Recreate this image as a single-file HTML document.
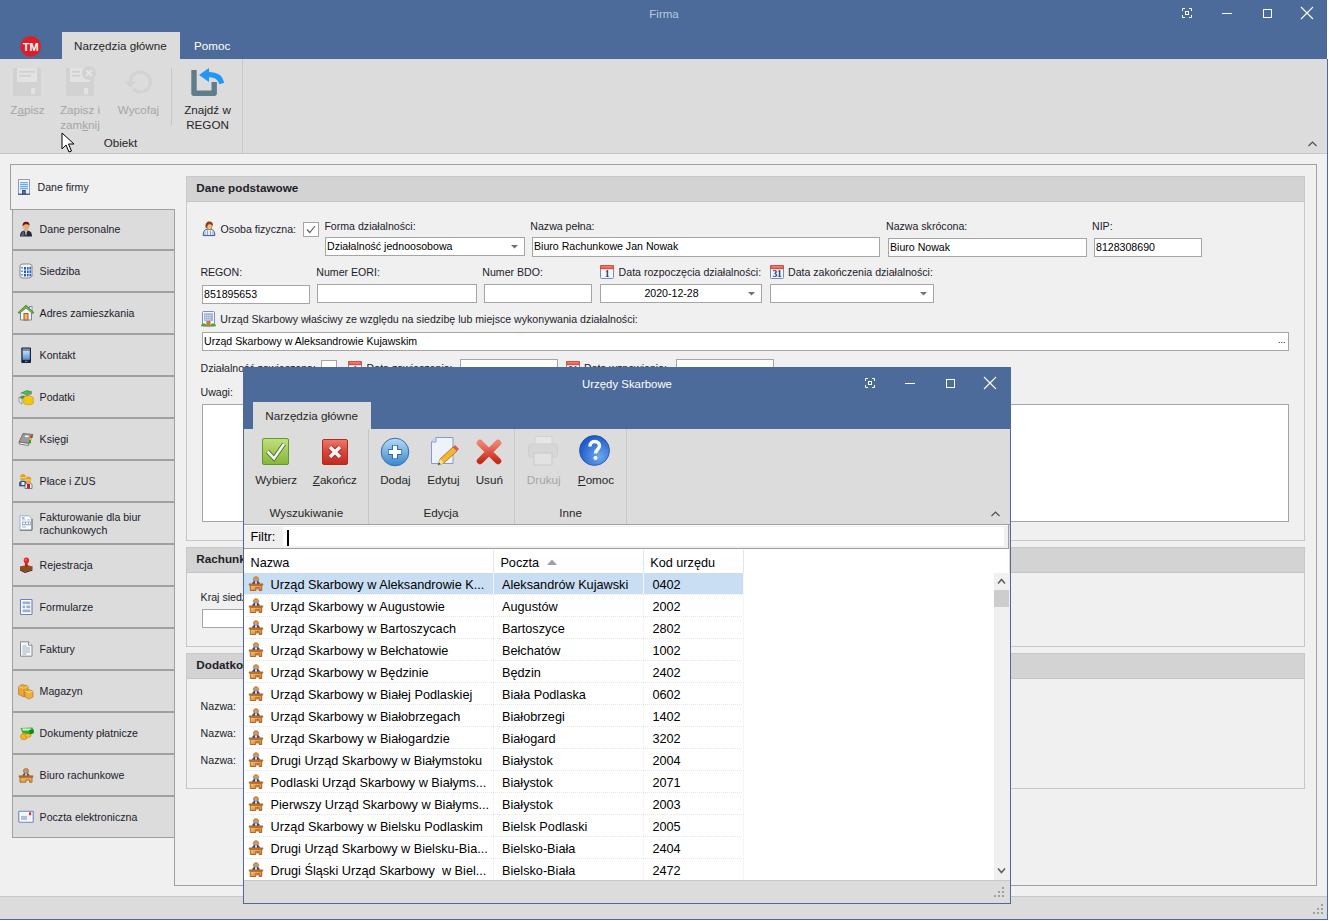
<!DOCTYPE html>
<html><head><meta charset="utf-8"><style>
html,body{margin:0;padding:0;}
body{width:1329px;height:921px;position:relative;overflow:hidden;background:#fff;font-family:"Liberation Sans",sans-serif;}
div{position:absolute;box-sizing:border-box;}
.t{white-space:nowrap;line-height:16px;height:16px;}
svg{overflow:visible}
</style></head><body>
<div style="left:0px;top:0px;width:1327px;height:59px;background:#4c6b9b"></div>
<div class="t" style="left:514px;width:300px;text-align:center;top:6.0px;font-size:11.5px;color:#b8c8de;">Firma</div>
<svg style="position:absolute;left:1182px;top:8px" width="10" height="10" viewBox="0 0 10 10"><g stroke="#fff" stroke-width="1" fill="none"><path d="M0.5 3V0.5H3M7 0.5H9.5V3M9.5 7V9.5H7M3 9.5H0.5V7"/><rect x="3.5" y="3.5" width="3" height="3"/></g></svg>
<svg style="position:absolute;left:1222px;top:13px" width="10" height="1" viewBox="0 0 10 1"><rect x="0" y="0" width="10" height="1" fill="#fff"/></svg>
<svg style="position:absolute;left:1263px;top:9px" width="9" height="9" viewBox="0 0 9 9"><rect x="0.5" y="0.5" width="8" height="8" stroke="#fff" fill="none"/></svg>
<svg style="position:absolute;left:1301px;top:7px" width="12" height="12" viewBox="0 0 12 12"><path d="M0 0L12 12M12 0L0 12" stroke="#fff" stroke-width="1.1"/></svg>
<svg style="position:absolute;left:20px;top:36px" width="22" height="22" viewBox="0 0 22 22"><circle cx="10.6" cy="10.3" r="10.4" fill="#dc1f26"/><text x="10.8" y="14.6" font-family="Liberation Sans" font-weight="bold" font-size="11" fill="#fff" text-anchor="middle">TM</text></svg>
<div style="left:62px;top:32px;width:118px;height:27px;background:#dcdcdc"></div>
<div class="t" style="left:74px;top:38.0px;font-size:11.66px;color:#262626;">Narzędzia główne</div>
<div class="t" style="left:194px;top:38.0px;font-size:11.66px;color:#ffffff;">Pomoc</div>
<div style="left:0px;top:59px;width:1327px;height:94px;background:#dcdcdc"></div>
<div style="left:0px;top:153px;width:1327px;height:1px;background:#c6c6c6"></div>
<div style="left:171px;top:68px;width:1px;height:57px;background:#c6c6c6"></div>
<div style="left:242px;top:59px;width:1px;height:94px;background:#c6c6c6"></div>
<svg style="position:absolute;left:13px;top:68px" width="28" height="28" viewBox="0 0 28 28"><rect x="0" y="0" width="28" height="28" fill="#d2d2d2"/><rect x="4" y="0" width="20" height="14" fill="#e2e2e2"/><rect x="6" y="3" width="16" height="1.6" fill="#d0d0d0"/><rect x="6" y="7" width="12" height="1.6" fill="#d0d0d0"/><rect x="18" y="20" width="4" height="6" fill="#e2e2e2"/></svg>
<svg style="position:absolute;left:66px;top:66px" width="30" height="30" viewBox="0 0 30 30"><rect x="0" y="2" width="28" height="28" fill="#d2d2d2"/><rect x="4" y="2" width="20" height="14" fill="#e2e2e2"/><rect x="6" y="5" width="8" height="1.6" fill="#d0d0d0"/><rect x="6" y="9" width="8" height="1.6" fill="#d0d0d0"/><rect x="18" y="22" width="4" height="6" fill="#e2e2e2"/><circle cx="23" cy="7" r="7" fill="#d2d2d2"/><path d="M20 4l6 6M26 4l-6 6" stroke="#e4e4e4" stroke-width="1.8"/></svg>
<svg style="position:absolute;left:124px;top:70px" width="30" height="26" viewBox="0 0 30 26"><path d="M6.3 11.9A10 10 0 1 1 9.2 19" stroke="#d3d3d3" stroke-width="3.2" fill="none"/><path d="M0.5 11.3H12L6.3 18Z" fill="#d3d3d3"/></svg>
<svg style="position:absolute;left:190px;top:66px" width="36" height="32" viewBox="0 0 36 32"><path d="M4 4.1V27.2H24.2V16" stroke="#607d8b" stroke-width="5.4" fill="none" stroke-linejoin="round"/><path d="M9 9L19 1.9V16Z" fill="#2196f3"/><path d="M17.5 8.8C24 8.3 30 10.5 31.8 17.5" stroke="#2196f3" stroke-width="5.2" fill="none"/></svg>
<div class="t" style="left:-122.5px;width:300px;text-align:center;top:102.0px;font-size:11.66px;color:#a6a6a6;">Z<u>a</u>pisz</div>
<div class="t" style="left:-70px;width:300px;text-align:center;top:102.0px;font-size:11.66px;color:#a6a6a6;">Zapisz i</div>
<div class="t" style="left:-70px;width:300px;text-align:center;top:117.0px;font-size:11.66px;color:#a6a6a6;">zam<u>k</u>nij</div>
<div class="t" style="left:-11.5px;width:300px;text-align:center;top:102.0px;font-size:11.66px;color:#a6a6a6;">Wycofaj</div>
<div class="t" style="left:57.5px;width:300px;text-align:center;top:102.0px;font-size:11.66px;color:#262626;">Znajdź w</div>
<div class="t" style="left:57.5px;width:300px;text-align:center;top:117.0px;font-size:11.66px;color:#262626;">REGON</div>
<div class="t" style="left:-29.5px;width:300px;text-align:center;top:134.5px;font-size:11.66px;color:#262626;">Obiekt</div>
<div style="left:0px;top:154px;width:1327px;height:742px;background:#f0f0f0"></div>
<div style="left:0px;top:896px;width:1327px;height:1px;background:#c8c8c8"></div>
<div style="left:0px;top:897px;width:1327px;height:22px;background:#dcdcdc"></div>
<div style="left:0px;top:919px;width:1328px;height:1px;background:#4c6b9b"></div>
<div style="left:1327px;top:59px;width:1px;height:861px;background:#4c6b9b"></div>
<svg style="position:absolute;left:1311px;top:902px" width="12" height="12" viewBox="0 0 12 12"><rect x="10" y="2" width="2" height="2" fill="#a0a0a0"/><rect x="6" y="6" width="2" height="2" fill="#a0a0a0"/><rect x="10" y="6" width="2" height="2" fill="#a0a0a0"/><rect x="2" y="10" width="2" height="2" fill="#a0a0a0"/><rect x="6" y="10" width="2" height="2" fill="#a0a0a0"/><rect x="10" y="10" width="2" height="2" fill="#a0a0a0"/></svg>
<div style="left:1328px;top:0px;width:1px;height:921px;background:#ffffff"></div>
<div style="left:10px;top:164px;width:1306px;height:1px;background:#a0a0a0"></div>
<div style="left:10px;top:164px;width:1px;height:46px;background:#a0a0a0"></div>
<div style="left:10px;top:209px;width:3px;height:1px;background:#a0a0a0"></div>
<div style="left:1316px;top:164px;width:1px;height:722px;background:#a0a0a0"></div>
<div style="left:174px;top:885px;width:1143px;height:1px;background:#a0a0a0"></div>
<div style="left:174px;top:837px;width:1px;height:49px;background:#a0a0a0"></div>
<svg style="position:absolute;left:17px;top:179px" width="14" height="16" viewBox="0 0 14 16"><rect x="1.5" y="0.5" width="11" height="15" fill="#eaf0f8" stroke="#8c9cc0" stroke-width="1"/><rect x="2" y="1" width="10" height="1.6" fill="#ffffff"/><g fill="#6aaae6"><rect x="3" y="3" width="8" height="1.3" rx="0.6"/><rect x="3" y="5" width="8" height="1.3" rx="0.6"/><rect x="3" y="7" width="8" height="1.3" rx="0.6"/><rect x="3" y="9" width="8" height="1.3" rx="0.6"/></g><rect x="1" y="14.6" width="12" height="1.2" fill="#46527a"/><rect x="5" y="11" width="3.8" height="4.5" fill="#3a4a7a"/><rect x="6" y="12" width="1.8" height="2.5" fill="#6a7690"/></svg>
<div class="t" style="left:37.5px;top:179.0px;font-size:10.6px;color:#1b1b2b;">Dane firmy</div>
<div style="left:12px;top:209px;width:163px;height:41px;background:#dcdcdc;border:1px solid #a0a0a0;box-sizing:border-box"></div>
<div class="t" style="left:39.6px;top:221.0px;font-size:10.6px;color:#1b1b2b;">Dane personalne</div>
<svg style="position:absolute;left:18px;top:221px" width="16" height="16" viewBox="0 0 16 16"><path d="M2 15.5C2 11 4 9.5 8 9.5C12 9.5 14 11 14 15.5Z" fill="#232a3a"/><path d="M3 15C3 12 4.5 10.5 6 10.3L6.5 15Z" fill="#4a5a8a"/><path d="M6.5 9.6L8 15L9.5 9.6Z" fill="#f0f0f0"/><path d="M7.4 10.5L8 14L8.6 10.5Z" fill="#c02020"/><ellipse cx="8" cy="5.6" rx="3.1" ry="3.6" fill="#e8b070"/><path d="M4.6 5.5C4.3 2 6 0.8 8.2 0.8C10.5 0.8 11.8 2.2 11.5 5C10.8 3.5 9.5 3 8 3.2C6.5 3.2 5.5 4 4.6 5.5Z" fill="#6a1414"/></svg>
<div style="left:12px;top:250px;width:163px;height:42px;background:#dcdcdc;border:1px solid #a0a0a0;box-sizing:border-box"></div>
<div class="t" style="left:39.6px;top:263.0px;font-size:10.6px;color:#1b1b2b;">Siedziba</div>
<svg style="position:absolute;left:18px;top:263px" width="16" height="16" viewBox="0 0 16 16"><path d="M2 2.5L4 1H12L14 2.5V13.5L11 15H4L2 13.5Z" fill="#f4f6fa" stroke="#7a7a7a" stroke-width="0.9"/><g fill="#1a5ad0"><rect x="6" y="4" width="2" height="2.6"/><rect x="9" y="4" width="1.6" height="2.6"/><rect x="11.5" y="3.8" width="1.6" height="2.6"/><rect x="6" y="7.5" width="2" height="2.6"/><rect x="9" y="7.5" width="1.6" height="2.6"/><rect x="11.5" y="7.3" width="1.6" height="2.6"/><rect x="6" y="11" width="2" height="2.4"/><rect x="9" y="11" width="1.6" height="2.4"/><rect x="11.5" y="10.8" width="1.6" height="2.4"/></g><g fill="#6a9ae0"><rect x="3" y="4" width="2" height="1.5"/><rect x="3" y="7.5" width="2" height="1.5"/><rect x="3" y="11" width="2" height="1.5"/></g></svg>
<div style="left:12px;top:292px;width:163px;height:42px;background:#dcdcdc;border:1px solid #a0a0a0;box-sizing:border-box"></div>
<div class="t" style="left:39.6px;top:305.0px;font-size:10.6px;color:#1b1b2b;">Adres zamieszkania</div>
<svg style="position:absolute;left:18px;top:305px" width="16" height="16" viewBox="0 0 16 16"><rect x="11.5" y="1.5" width="2.5" height="5" fill="#fff" stroke="#6a84c4" stroke-width="0.9"/><path d="M2.5 7.5V15H13.5V7.5L8 3Z" fill="#f0f6fc" stroke="#6a84c4" stroke-width="1"/><rect x="6" y="8.5" width="4" height="6.5" fill="#f0b860" stroke="#b0600a" stroke-width="1"/><path d="M0.5 8.3L8 1.2L15.5 8.3" stroke="#4a8a1a" stroke-width="2.2" fill="none"/><path d="M1.5 7.6L8 1.8L14.5 7.6" stroke="#9ad050" stroke-width="0.9" fill="none"/></svg>
<div style="left:12px;top:334px;width:163px;height:42px;background:#dcdcdc;border:1px solid #a0a0a0;box-sizing:border-box"></div>
<div class="t" style="left:39.6px;top:347.0px;font-size:10.6px;color:#1b1b2b;">Kontakt</div>
<svg style="position:absolute;left:18px;top:347px" width="16" height="16" viewBox="0 0 16 16"><rect x="3.3" y="0.5" width="9.7" height="15.5" rx="0.8" fill="#1c2232"/><rect x="4.4" y="1.5" width="7.5" height="2.2" fill="#8090b8"/><defs><linearGradient id="ph" x1="0" y1="0" x2="0" y2="1"><stop offset="0" stop-color="#b8e4f6"/><stop offset="1" stop-color="#5a8ad0"/></linearGradient></defs><rect x="4.6" y="3.8" width="7.2" height="9" fill="url(#ph)"/><rect x="7" y="13.8" width="2.4" height="1" fill="#8090c0"/></svg>
<div style="left:12px;top:376px;width:163px;height:42px;background:#dcdcdc;border:1px solid #a0a0a0;box-sizing:border-box"></div>
<div class="t" style="left:39.6px;top:389.0px;font-size:10.6px;color:#1b1b2b;">Podatki</div>
<svg style="position:absolute;left:18px;top:389px" width="16" height="16" viewBox="0 0 16 16"><path d="M3 4L9 1.5L14 3L8 6Z" fill="#3cc83c" stroke="#2a7a2a" stroke-width="0.6"/><path d="M3 4L8 6V8L3 6Z" fill="#f0f0f0" stroke="#808080" stroke-width="0.5"/><path d="M8 6L14 3V5L8 8Z" fill="#909090"/><path d="M1 8L6 6.5L9 8L4 10Z" fill="#3a9a2a"/><path d="M1 8L4 10V15L1 13Z" fill="#e8e8e8" stroke="#707070" stroke-width="0.6"/><ellipse cx="10.5" cy="9" rx="4.8" ry="2" fill="#f6d020" stroke="#c88a10" stroke-width="0.6"/><path d="M5.7 9V14C5.7 15 8 15.8 10.5 15.8C13 15.8 15.3 15 15.3 14V9" fill="#f0c810" stroke="#c88a10" stroke-width="0.6"/></svg>
<div style="left:12px;top:418px;width:163px;height:42px;background:#dcdcdc;border:1px solid #a0a0a0;box-sizing:border-box"></div>
<div class="t" style="left:39.6px;top:431.0px;font-size:10.6px;color:#1b1b2b;">Księgi</div>
<svg style="position:absolute;left:18px;top:431px" width="16" height="16" viewBox="0 0 16 16"><path d="M5 2.5L15 3.5L11 12.5L1 11Z" fill="#9a9a9a" stroke="#606060" stroke-width="0.8"/><path d="M1 11L11 12.5L10.5 14.5L1.5 13Z" fill="#f8f8f8" stroke="#606060" stroke-width="0.8"/><rect x="7" y="4.5" width="3.5" height="1.6" fill="#fff"/><rect x="12.5" y="4.5" width="2" height="2.5" fill="#e02020"/><rect x="11.8" y="7" width="2" height="2.4" fill="#f0c010"/><rect x="11" y="9.4" width="2" height="2.8" fill="#20a020"/></svg>
<div style="left:12px;top:460px;width:163px;height:42px;background:#dcdcdc;border:1px solid #a0a0a0;box-sizing:border-box"></div>
<div class="t" style="left:39.6px;top:473.0px;font-size:10.6px;color:#1b1b2b;">Płace i ZUS</div>
<svg style="position:absolute;left:18px;top:473px" width="16" height="16" viewBox="0 0 16 16"><path d="M1.5 13V10C1.5 8.5 3 8 5 8C7 8 8.5 8.5 8.5 10V13Z" fill="#3a5a9a" stroke="#2a3a6a" stroke-width="0.6"/><rect x="3.5" y="9" width="3" height="3" fill="#e8eef8"/><circle cx="5" cy="5.5" r="2.6" fill="#e0a060"/><path d="M2 4.5C2 2 3.5 1 5 1C6.5 1 8 2 8 4.5Z" fill="#e0a030"/><rect x="1.8" y="4" width="6.4" height="1" fill="#f8e030"/><path d="M7 15.5V12C7 10.5 8.5 10 10.5 10C12.5 10 14 10.5 14 12V15.5Z" fill="#f0f0f0" stroke="#404040" stroke-width="0.6"/><path d="M9 11H12V15.5H9Z" fill="#c02020"/><circle cx="10.5" cy="8" r="2.6" fill="#e0a060"/><path d="M7.5 7C7.5 4.5 9 3.5 10.5 3.5C12 3.5 13.5 4.5 13.5 7Z" fill="#e0a030"/><rect x="7.3" y="6.5" width="6.4" height="1" fill="#f8e030"/></svg>
<div style="left:12px;top:502px;width:163px;height:42px;background:#dcdcdc;border:1px solid #a0a0a0;box-sizing:border-box"></div>
<div class="t" style="left:39.6px;top:508.5px;font-size:10.6px;color:#1b1b2b;">Fakturowanie dla biur</div>
<div class="t" style="left:39.6px;top:521.5px;font-size:10.6px;color:#1b1b2b;">rachunkowych</div>
<svg style="position:absolute;left:18px;top:515px" width="16" height="16" viewBox="0 0 16 16"><path d="M2 0.8H11L14 3.8V15.2H2Z" fill="#fff" stroke="#9ab0d0" stroke-width="1"/><path d="M14 3.8V15.2H2" stroke="#5a7080" stroke-width="1" fill="none"/><rect x="4" y="2.5" width="2.5" height="1" fill="#5a70b0"/><rect x="4" y="4.5" width="3.5" height="0.8" fill="#9ab0c8"/><rect x="9" y="4.5" width="3.5" height="0.8" fill="#9ab0c8"/><rect x="4" y="6.5" width="9" height="3.8" fill="#9aaed0"/><g fill="#fff"><rect x="5" y="7.5" width="2" height="1.6"/><rect x="8" y="7.5" width="2" height="1.6"/><rect x="11" y="7.5" width="1.2" height="1.6"/></g><rect x="4" y="11.5" width="4" height="1" fill="#9ab8c8"/></svg>
<div style="left:12px;top:544px;width:163px;height:42px;background:#dcdcdc;border:1px solid #a0a0a0;box-sizing:border-box"></div>
<div class="t" style="left:39.6px;top:557.0px;font-size:10.6px;color:#1b1b2b;">Rejestracja</div>
<svg style="position:absolute;left:18px;top:557px" width="16" height="16" viewBox="0 0 16 16"><path d="M2 9.5L9 8L14.5 9.5V12.5L7 15L2 12.5Z" fill="#8a4a1a"/><path d="M2 12.5L7 15L14.5 12.5V13.5L7 16L2 13.5Z" fill="#301808"/><path d="M2 9.5L7 11L14.5 9.5" stroke="#a05a20" stroke-width="0.6" fill="none"/><rect x="7" y="5.5" width="2.6" height="5" fill="#d01818"/><ellipse cx="8.4" cy="3.6" rx="2.7" ry="3" fill="#e02828"/><ellipse cx="7.8" cy="2.8" rx="1" ry="0.9" fill="#f08080"/></svg>
<div style="left:12px;top:586px;width:163px;height:42px;background:#dcdcdc;border:1px solid #a0a0a0;box-sizing:border-box"></div>
<div class="t" style="left:39.6px;top:599.0px;font-size:10.6px;color:#1b1b2b;">Formularze</div>
<svg style="position:absolute;left:18px;top:599px" width="16" height="16" viewBox="0 0 16 16"><rect x="2.5" y="0.5" width="11.5" height="15" rx="0.8" fill="#fff" stroke="#6a80c0" stroke-width="1.1"/><g fill="#9ab0d2"><rect x="4.5" y="2.5" width="7.8" height="2.7"/><rect x="4.5" y="6.5" width="2.7" height="2.7"/><rect x="8.3" y="6.5" width="4" height="2.7"/><rect x="4.5" y="10.5" width="7.8" height="2.7"/></g></svg>
<div style="left:12px;top:628px;width:163px;height:42px;background:#dcdcdc;border:1px solid #a0a0a0;box-sizing:border-box"></div>
<div class="t" style="left:39.6px;top:641.0px;font-size:10.6px;color:#1b1b2b;">Faktury</div>
<svg style="position:absolute;left:18px;top:641px" width="16" height="16" viewBox="0 0 16 16"><path d="M2.5 0.8H10.5L14 4.2V15.2H2.5Z" fill="#f4f8fc" stroke="#8a8a8a" stroke-width="1"/><path d="M10.5 0.8V4.2H14" fill="#fff" stroke="#8a8a8a" stroke-width="1"/><g fill="#a0b0c0"><rect x="4.5" y="4.5" width="4" height="1"/><rect x="4.5" y="6.5" width="7.5" height="1"/><rect x="4.5" y="8.5" width="7.5" height="1"/><rect x="4.5" y="10.5" width="7.5" height="1"/><rect x="4.5" y="12.5" width="4" height="1"/></g></svg>
<div style="left:12px;top:670px;width:163px;height:42px;background:#dcdcdc;border:1px solid #a0a0a0;box-sizing:border-box"></div>
<div class="t" style="left:39.6px;top:683.0px;font-size:10.6px;color:#1b1b2b;">Magazyn</div>
<svg style="position:absolute;left:18px;top:683px" width="16" height="16" viewBox="0 0 16 16"><path d="M0.5 3.5L4 1.5L10 3V11.5L6 14L0.5 11.5Z" fill="#e8a838" stroke="#b86a18" stroke-width="0.6"/><path d="M0.5 3.5L6 5.5L10 3" stroke="#f8d870" stroke-width="0.9" fill="none"/><path d="M6 5.5V14" stroke="#c07820" stroke-width="0.6"/><path d="M7 8L10.5 6.5L15 8V14L11 16L7 14Z" fill="#f0b040" stroke="#b86a18" stroke-width="0.6"/><path d="M7 8L11 9.5L15 8" stroke="#f8e080" stroke-width="0.9" fill="none"/></svg>
<div style="left:12px;top:712px;width:163px;height:42px;background:#dcdcdc;border:1px solid #a0a0a0;box-sizing:border-box"></div>
<div class="t" style="left:39.6px;top:725.0px;font-size:10.6px;color:#1b1b2b;">Dokumenty płatnicze</div>
<svg style="position:absolute;left:18px;top:725px" width="16" height="16" viewBox="0 0 16 16"><path d="M2.5 3L14.5 2.5L16 6.5L11 10.5L5 9Z" fill="#30b030"/><path d="M4 3.5H13L12 5.5H5Z" fill="#e8f8e8"/><path d="M11 5L15.5 4.5L16 8L11.5 10Z" fill="#109010"/><ellipse cx="6" cy="11.5" rx="3.5" ry="3.2" fill="#f0b820" stroke="#c88010" stroke-width="0.6"/><ellipse cx="10" cy="10.5" rx="3.2" ry="1.8" fill="#f0c030" stroke="#c88010" stroke-width="0.6"/></svg>
<div style="left:12px;top:754px;width:163px;height:42px;background:#dcdcdc;border:1px solid #a0a0a0;box-sizing:border-box"></div>
<div class="t" style="left:39.6px;top:767.0px;font-size:10.6px;color:#1b1b2b;">Biuro rachunkowe</div>
<svg style="position:absolute;left:18px;top:767px" width="16" height="16" viewBox="0 0 16 16"><circle cx="8" cy="4" r="2.6" fill="#d89050" stroke="#9a5a20" stroke-width="0.6"/><path d="M4.5 8.8C4.5 6.8 6 6.2 8 6.2C10 6.2 11.5 6.8 11.5 8.8Z" fill="#3050a0"/><rect x="7.2" y="6.6" width="1.6" height="2.2" fill="#fff"/><rect x="1" y="8.8" width="14" height="1.4" fill="#c07020" stroke="#a05a10" stroke-width="0.5"/><path d="M2 10.2V15.2H8V13H11.5V15.2H14V10.2Z" fill="#e8a858" stroke="#a05a10" stroke-width="0.8"/></svg>
<div style="left:12px;top:796px;width:163px;height:42px;background:#dcdcdc;border:1px solid #a0a0a0;box-sizing:border-box"></div>
<div class="t" style="left:39.6px;top:809.0px;font-size:10.6px;color:#1b1b2b;">Poczta elektroniczna</div>
<svg style="position:absolute;left:18px;top:809px" width="16" height="16" viewBox="0 0 16 16"><rect x="0.8" y="2.2" width="14.4" height="11" rx="0.8" fill="#fff" stroke="#6a84c4" stroke-width="1.1"/><rect x="2.5" y="3.7" width="11" height="8" fill="#eef2fa"/><rect x="11" y="3.2" width="2.2" height="3" fill="#d83a28"/><rect x="3" y="7.5" width="6" height="0.9" fill="#6a80b8"/><rect x="3" y="9.5" width="6" height="0.9" fill="#6a80b8"/></svg>
<div style="left:186px;top:176px;width:1119px;height:365px;border:1px solid #c8c8c8;box-sizing:border-box;background:#f0f0f0"></div>
<div style="left:187px;top:177px;width:1117px;height:25px;background:#d3d3d3"></div>
<div class="t" style="left:196.3px;top:180.0px;font-size:11.7px;color:#1e1e28;font-weight:bold">Dane podstawowe</div>
<div style="left:187px;top:201px;width:1117px;height:1px;background:#c4c4c4"></div>
<div style="left:186px;top:547px;width:1119px;height:100px;border:1px solid #c8c8c8;box-sizing:border-box;background:#f0f0f0"></div>
<div style="left:187px;top:548px;width:1117px;height:25px;background:#d3d3d3"></div>
<div class="t" style="left:196.3px;top:551.0px;font-size:11.7px;color:#1e1e28;font-weight:bold">Rachunki bankowe</div>
<div style="left:187px;top:572px;width:1117px;height:1px;background:#c4c4c4"></div>
<div style="left:186px;top:653px;width:1119px;height:136px;border:1px solid #c8c8c8;box-sizing:border-box;background:#f0f0f0"></div>
<div style="left:187px;top:654px;width:1117px;height:25px;background:#d3d3d3"></div>
<div class="t" style="left:196.3px;top:657.0px;font-size:11.7px;color:#1e1e28;font-weight:bold">Dodatkowe informacje</div>
<div style="left:187px;top:678px;width:1117px;height:1px;background:#c4c4c4"></div>
<svg style="position:absolute;left:202px;top:221px" width="14" height="16" viewBox="0 0 14 16"><path d="M1.2 14.6C1.2 10 2.5 8.2 7 8.2C11.5 8.2 12.8 10 12.8 14.6Z" fill="#e8eef8" stroke="#3a5590" stroke-width="1"/><path d="M3 14V10.5M5.5 14V9.5M8.5 14V9.5M11 14V10.5" stroke="#8aa0d0" stroke-width="1"/><ellipse cx="7.4" cy="5.4" rx="2.6" ry="3.2" fill="#f0c080" stroke="#a06020" stroke-width="0.6"/><path d="M3.6 6.5C3 2.5 5 0.6 7.5 0.6C10 0.6 11.3 2.2 10.9 5C10 3.8 8.5 3.2 6.8 3.4C5.8 3.6 5 5 4.8 7.5Z" fill="#8a4018"/></svg>
<div class="t" style="left:220.6px;top:220.6px;font-size:10.6px;color:#1b1b2b;">Osoba fizyczna:</div>
<div style="left:303px;top:222px;width:16px;height:15px;background:#fff;border:1px solid #a5a5a5;box-sizing:border-box"></div>
<svg style="position:absolute;left:306px;top:225px" width="10" height="9" viewBox="0 0 10 9"><path d="M1 4.5L3.8 7.5L9 1" stroke="#606060" stroke-width="1.2" fill="none"/></svg>
<div class="t" style="left:324.4px;top:218.0px;font-size:10.6px;color:#1b1b2b;">Forma działalności:</div>
<div style="left:325px;top:237px;width:200px;height:19px;background:#fff;border:1px solid #a5a5a5;box-sizing:border-box"></div>
<div class="t" style="left:327px;top:237.7px;font-size:10.6px;color:#000;">Działalność jednoosobowa</div>
<svg style="position:absolute;left:511px;top:245px" width="7" height="4" viewBox="0 0 7 4"><path d="M0 0H7L3.5 3.5Z" fill="#707070"/></svg>
<div class="t" style="left:530.3px;top:218.3px;font-size:10.6px;color:#1b1b2b;">Nazwa pełna:</div>
<div style="left:532px;top:237px;width:348px;height:20px;background:#fff;border:1px solid #a5a5a5;box-sizing:border-box"></div>
<div class="t" style="left:534px;top:238.2px;font-size:10.6px;color:#000;">Biuro Rachunkowe Jan Nowak</div>
<div class="t" style="left:886px;top:218.3px;font-size:10.6px;color:#1b1b2b;">Nazwa skrócona:</div>
<div style="left:888px;top:238px;width:199px;height:19px;background:#fff;border:1px solid #a5a5a5;box-sizing:border-box"></div>
<div class="t" style="left:890px;top:238.7px;font-size:10.6px;color:#000;">Biuro Nowak</div>
<div class="t" style="left:1092px;top:218.3px;font-size:10.6px;color:#1b1b2b;">NIP:</div>
<div style="left:1094px;top:238px;width:108px;height:19px;background:#fff;border:1px solid #a5a5a5;box-sizing:border-box"></div>
<div class="t" style="left:1096px;top:238.7px;font-size:10.6px;color:#000;">8128308690</div>
<div class="t" style="left:200.4px;top:264.4px;font-size:10.6px;color:#1b1b2b;">REGON:</div>
<div class="t" style="left:316.3px;top:264.4px;font-size:10.6px;color:#1b1b2b;">Numer EORI:</div>
<div class="t" style="left:482.3px;top:264.4px;font-size:10.6px;color:#1b1b2b;">Numer BDO:</div>
<svg style="position:absolute;left:600px;top:265px" width="14" height="14" viewBox="0 0 14 14"><rect x="0.5" y="0.5" width="13" height="13" rx="1" fill="#f4f6fb" stroke="#6f8cc8"/><rect x="0" y="0" width="14" height="4.2" rx="1" fill="#d8503e"/><rect x="1.5" y="1.2" width="11" height="1.4" fill="#ea8a78"/><text x="7.1" y="11.8" font-family="Liberation Serif" font-size="9.6" font-weight="bold" fill="#263a66" text-anchor="middle" letter-spacing="-0.3">1</text></svg>
<div class="t" style="left:618.6px;top:264.4px;font-size:10.6px;color:#1b1b2b;">Data rozpoczęcia działalności:</div>
<svg style="position:absolute;left:770px;top:265px" width="14" height="14" viewBox="0 0 14 14"><rect x="0.5" y="0.5" width="13" height="13" rx="1" fill="#f4f6fb" stroke="#6f8cc8"/><rect x="0" y="0" width="14" height="4.2" rx="1" fill="#d8503e"/><rect x="1.5" y="1.2" width="11" height="1.4" fill="#ea8a78"/><text x="7.1" y="11.8" font-family="Liberation Serif" font-size="9.6" font-weight="bold" fill="#263a66" text-anchor="middle" letter-spacing="-0.3">31</text></svg>
<div class="t" style="left:788px;top:264.4px;font-size:10.6px;color:#1b1b2b;">Data zakończenia działalności:</div>
<div style="left:202px;top:285px;width:108px;height:19px;background:#fff;border:1px solid #a5a5a5;box-sizing:border-box"></div>
<div class="t" style="left:204px;top:285.7px;font-size:10.6px;color:#000;">851895653</div>
<div style="left:317px;top:284px;width:160px;height:19px;background:#fff;border:1px solid #a5a5a5;box-sizing:border-box"></div>
<div style="left:484px;top:284px;width:108px;height:19px;background:#fff;border:1px solid #a5a5a5;box-sizing:border-box"></div>
<div style="left:600px;top:284px;width:162px;height:19px;background:#fff;border:1px solid #a5a5a5;box-sizing:border-box"></div>
<div class="t" style="left:521.5px;width:300px;text-align:center;top:284.7px;font-size:10.6px;color:#000;">2020-12-28</div>
<svg style="position:absolute;left:748px;top:292px" width="7" height="4" viewBox="0 0 7 4"><path d="M0 0H7L3.5 3.5Z" fill="#707070"/></svg>
<div style="left:770px;top:284px;width:164px;height:19px;background:#fff;border:1px solid #a5a5a5;box-sizing:border-box"></div>
<svg style="position:absolute;left:920px;top:292px" width="7" height="4" viewBox="0 0 7 4"><path d="M0 0H7L3.5 3.5Z" fill="#707070"/></svg>
<svg style="position:absolute;left:201px;top:311px" width="16" height="16" viewBox="0 0 16 16"><rect x="1.5" y="0.5" width="12" height="14.5" rx="1" fill="#f2f8fe" stroke="#7a90c0" stroke-width="1"/><rect x="3" y="2.2" width="9" height="7.8" fill="#a4b6d8"/><g fill="#e6f2fc"><rect x="4.2" y="4.0" width="1" height="1"/><rect x="4.2" y="6.1" width="1" height="1"/><rect x="4.2" y="8.2" width="1" height="1"/><rect x="6.300000000000001" y="4.0" width="1" height="1"/><rect x="6.300000000000001" y="6.1" width="1" height="1"/><rect x="6.300000000000001" y="8.2" width="1" height="1"/><rect x="8.4" y="4.0" width="1" height="1"/><rect x="8.4" y="6.1" width="1" height="1"/><rect x="8.4" y="8.2" width="1" height="1"/></g><rect x="5.8" y="10.3" width="3.3" height="4.7" fill="#d88018" stroke="#a05a10" stroke-width="0.5"/><path d="M0 15.3C0 13 1.5 12.5 3 12.5C4.8 12.5 5.5 13.5 5.5 15.3Z" fill="#5aa028"/><path d="M9.5 15.3C9.5 13 10.5 12.5 12 12.5C13.8 12.5 15 13.5 15 15.3Z" fill="#5aa028"/><rect x="5.5" y="14.6" width="4" height="0.8" fill="#7a90c0"/></svg>
<div class="t" style="left:220.3px;top:311.1px;font-size:10.6px;color:#1b1b2b;">Urząd Skarbowy właściwy ze względu na siedzibę lub miejsce wykonywania działalności:</div>
<div style="left:202px;top:332px;width:1087px;height:19px;background:#fff;border:1px solid #a5a5a5;box-sizing:border-box"></div>
<div class="t" style="left:204px;top:332.7px;font-size:10.6px;color:#000;">Urząd Skarbowy w Aleksandrowie Kujawskim</div>
<div class="t" style="left:1278px;top:331.5px;font-size:9px;color:#000;">...</div>
<div class="t" style="left:200.5px;top:360.0px;font-size:10.6px;color:#1b1b2b;">Działalność zawieszona:</div>
<div style="left:321px;top:360px;width:16px;height:15px;background:#fff;border:1px solid #a5a5a5;box-sizing:border-box"></div>
<svg style="position:absolute;left:348px;top:361px" width="14" height="14" viewBox="0 0 14 14"><rect x="0.5" y="0.5" width="13" height="13" rx="1" fill="#f4f6fb" stroke="#6f8cc8"/><rect x="0" y="0" width="14" height="4.2" rx="1" fill="#d8503e"/><rect x="1.5" y="1.2" width="11" height="1.4" fill="#ea8a78"/><text x="7.1" y="11.8" font-family="Liberation Serif" font-size="9.6" font-weight="bold" fill="#263a66" text-anchor="middle" letter-spacing="-0.3">1</text></svg>
<div class="t" style="left:366.6px;top:360.0px;font-size:10.6px;color:#1b1b2b;">Data zawieszenia:</div>
<div style="left:460px;top:359px;width:98px;height:19px;background:#fff;border:1px solid #a5a5a5;box-sizing:border-box"></div>
<svg style="position:absolute;left:566px;top:361px" width="14" height="14" viewBox="0 0 14 14"><rect x="0.5" y="0.5" width="13" height="13" rx="1" fill="#f4f6fb" stroke="#6f8cc8"/><rect x="0" y="0" width="14" height="4.2" rx="1" fill="#d8503e"/><rect x="1.5" y="1.2" width="11" height="1.4" fill="#ea8a78"/><text x="7.1" y="11.8" font-family="Liberation Serif" font-size="9.6" font-weight="bold" fill="#263a66" text-anchor="middle" letter-spacing="-0.3">31</text></svg>
<div class="t" style="left:584px;top:360.0px;font-size:10.6px;color:#1b1b2b;">Data wznowienia:</div>
<div style="left:676px;top:359px;width:98px;height:19px;background:#fff;border:1px solid #a5a5a5;box-sizing:border-box"></div>
<div class="t" style="left:200.5px;top:384.0px;font-size:10.6px;color:#1b1b2b;">Uwagi:</div>
<div style="left:202px;top:404px;width:1087px;height:118px;background:#fff;border:1px solid #a5a5a5;box-sizing:border-box"></div>
<div class="t" style="left:200.6px;top:589.4px;font-size:10.6px;color:#1b1b2b;">Kraj siedziby banku:</div>
<div style="left:202px;top:609px;width:198px;height:19px;background:#fff;border:1px solid #a5a5a5;box-sizing:border-box"></div>
<div class="t" style="left:200.6px;top:698.0px;font-size:10.6px;color:#1b1b2b;">Nazwa:</div>
<div class="t" style="left:200.6px;top:725.0px;font-size:10.6px;color:#1b1b2b;">Nazwa:</div>
<div class="t" style="left:200.6px;top:752.0px;font-size:10.6px;color:#1b1b2b;">Nazwa:</div>
<!--DIALOG-->
<div style="left:243px;top:367px;width:768px;height:537px;background:#dcdcdc;border:1px solid #4c6b9b;box-sizing:border-box"></div>
<div style="left:243px;top:367px;width:768px;height:62px;background:#4c6b9b"></div>
<div class="t" style="left:477px;width:300px;text-align:center;top:376.0px;font-size:11.4px;color:#ffffff;">Urzędy Skarbowe</div>
<svg style="position:absolute;left:865px;top:378px" width="10" height="10" viewBox="0 0 10 10"><g stroke="#fff" stroke-width="1" fill="none"><path d="M0.5 3V0.5H3M7 0.5H9.5V3M9.5 7V9.5H7M3 9.5H0.5V7"/><rect x="3.5" y="3.5" width="3" height="3"/></g></svg>
<svg style="position:absolute;left:905px;top:383px" width="10" height="1" viewBox="0 0 10 1"><rect x="0" y="0" width="10" height="1" fill="#fff"/></svg>
<svg style="position:absolute;left:946px;top:379px" width="9" height="9" viewBox="0 0 9 9"><rect x="0.5" y="0.5" width="8" height="8" stroke="#fff" fill="none"/></svg>
<svg style="position:absolute;left:984px;top:377px" width="12" height="12" viewBox="0 0 12 12"><path d="M0 0L12 12M12 0L0 12" stroke="#fff" stroke-width="1.1"/></svg>
<div style="left:253px;top:402px;width:118px;height:27px;background:#dcdcdc"></div>
<div class="t" style="left:161.60000000000002px;width:300px;text-align:center;top:407.8px;font-size:11.66px;color:#262626;">Narzędzia główne</div>
<div style="left:368px;top:429px;width:1px;height:95px;background:#c6c6c6"></div>
<div style="left:514px;top:429px;width:1px;height:95px;background:#c6c6c6"></div>
<div style="left:626px;top:429px;width:1px;height:95px;background:#c6c6c6"></div>
<div style="left:244px;top:524px;width:766px;height:1px;background:#a0a0a0"></div>
<svg style="position:absolute;left:991px;top:511px" width="9" height="6" viewBox="0 0 9 6"><path d="M0.5 5L4.5 1L8.5 5" stroke="#505050" stroke-width="1.2" fill="none"/></svg>
<svg style="position:absolute;left:1308px;top:141px" width="9" height="6" viewBox="0 0 9 6"><path d="M0.5 5L4.5 1L8.5 5" stroke="#505050" stroke-width="1.2" fill="none"/></svg>
<svg style="position:absolute;left:262px;top:438px" width="27" height="27" viewBox="0 0 27 27"><defs><linearGradient id="gg" x1="0" y1="0" x2="0" y2="1"><stop offset="0" stop-color="#c2e07a"/><stop offset="1" stop-color="#86b53a"/></linearGradient></defs><rect x="0.5" y="0.5" width="26" height="26" rx="1.5" fill="url(#gg)" stroke="#5f9a2c"/><path d="M5.5 13.5L12 20.5L22 6" stroke="#3d6a1a" stroke-width="4.2" fill="none"/><path d="M5.5 13.5L12 20.5L22 6" stroke="#f4f6fa" stroke-width="2.6" fill="none"/></svg>
<svg style="position:absolute;left:322px;top:439px" width="26" height="26" viewBox="0 0 26 26"><defs><linearGradient id="rg" x1="0" y1="0" x2="0" y2="1"><stop offset="0" stop-color="#ec7a6a"/><stop offset="0.5" stop-color="#d8463a"/><stop offset="1" stop-color="#c02a1e"/></linearGradient></defs><rect x="0.5" y="0.5" width="25" height="25" rx="1.5" fill="url(#rg)" stroke="#b02a20"/><path d="M8 8L18 18M18 8L8 18" stroke="#a82a20" stroke-width="5.6"/><path d="M8 8L18 18M18 8L8 18" stroke="#f2f4f8" stroke-width="3.6"/></svg>
<svg style="position:absolute;left:380px;top:437px" width="30" height="30" viewBox="0 0 30 30"><defs><linearGradient id="bg2" x1="0" y1="0" x2="0" y2="1"><stop offset="0" stop-color="#b8dcf4"/><stop offset="1" stop-color="#3a86cc"/></linearGradient></defs><circle cx="15" cy="15" r="13.8" fill="url(#bg2)" stroke="#2f6fb2" stroke-width="1"/><path d="M15 8V22M8 15H22" stroke="#2f6fb2" stroke-width="6.2"/><path d="M15 8.8V21.2M8.8 15H21.2" stroke="#fff" stroke-width="4"/></svg>
<svg style="position:absolute;left:430px;top:436px" width="30" height="32" viewBox="0 0 30 32"><path d="M6 1.5H23V27.5H1.5V6Z" fill="#eef2fa" stroke="#8a9ad0"/><path d="M1.5 6H6V1.5" fill="#d8e0f0" stroke="#8a9ad0"/><path d="M8 29L10 23L23 11L27 15L14 27Z" fill="#f2b630" stroke="#a86a10" stroke-width="0.8"/><path d="M23 11L25 9L29 13L27 15Z" fill="#e05a5a"/><path d="M8 29L10 23L14 27Z" fill="#f8e0b0"/><path d="M8 29L9 26.5L10.5 28Z" fill="#303050"/></svg>
<svg style="position:absolute;left:476px;top:439px" width="26" height="26" viewBox="0 0 26 26"><defs><linearGradient id="xg" x1="0" y1="0" x2="0" y2="1"><stop offset="0" stop-color="#f08070"/><stop offset="1" stop-color="#c82a1a"/></linearGradient></defs><path d="M4 4L22 22M22 4L4 22" stroke="url(#xg)" stroke-width="6.5" stroke-linecap="round"/></svg>
<svg style="position:absolute;left:527px;top:435px" width="32" height="32" viewBox="0 0 32 32"><rect x="8" y="1.5" width="17" height="9" fill="#e6e6e6" stroke="#d2d2d2"/><rect x="1.5" y="9" width="29" height="13" rx="2.5" fill="#d6d6d6" stroke="#cfcfcf"/><rect x="7" y="18" width="18" height="12" fill="#e2e2e2" stroke="#cacaca"/></svg>
<svg style="position:absolute;left:579px;top:435px" width="32" height="32" viewBox="0 0 32 32"><defs><radialGradient id="hg" cx="0.65" cy="0.7" r="0.7"><stop offset="0" stop-color="#6aa8ee"/><stop offset="1" stop-color="#1e58c8"/></radialGradient></defs><circle cx="15.5" cy="15.5" r="15" fill="url(#hg)" stroke="#1e50b0" stroke-width="0.8"/><path d="M11 11.5C11 8 13 6.5 15.7 6.5C18.6 6.5 20.5 8.3 20.5 10.8C20.5 14.5 16.5 14.5 16.5 18.5" stroke="#fff" stroke-width="3.4" fill="none"/><circle cx="16.5" cy="23" r="2.1" fill="#fff"/></svg>
<div class="t" style="left:126.19999999999999px;width:300px;text-align:center;top:472.0px;font-size:11.66px;color:#262626;">Wybierz</div>
<div class="t" style="left:184.8px;width:300px;text-align:center;top:472.0px;font-size:11.66px;color:#262626;"><u>Z</u>akończ</div>
<div class="t" style="left:245.39999999999998px;width:300px;text-align:center;top:472.0px;font-size:11.66px;color:#262626;">Dodaj</div>
<div class="t" style="left:293.4px;width:300px;text-align:center;top:472.0px;font-size:11.66px;color:#262626;">Edytuj</div>
<div class="t" style="left:339.3px;width:300px;text-align:center;top:472.0px;font-size:11.66px;color:#262626;">Usuń</div>
<div class="t" style="left:393.70000000000005px;width:300px;text-align:center;top:472.0px;font-size:11.66px;color:#a6a6a6;">Drukuj</div>
<div class="t" style="left:446px;width:300px;text-align:center;top:472.0px;font-size:11.66px;color:#262626;"><u>P</u>omoc</div>
<div class="t" style="left:156.3px;width:300px;text-align:center;top:504.79999999999995px;font-size:11.66px;color:#262626;">Wyszukiwanie</div>
<div class="t" style="left:290.9px;width:300px;text-align:center;top:504.79999999999995px;font-size:11.66px;color:#262626;">Edycja</div>
<div class="t" style="left:420.6px;width:300px;text-align:center;top:504.79999999999995px;font-size:11.66px;color:#262626;">Inne</div>
<div style="left:244px;top:525px;width:765px;height:23px;background:#f0f0f0"></div>
<div style="left:244px;top:525px;width:765px;height:1px;background:#ffffff"></div>
<div style="left:283px;top:527px;width:721px;height:19px;background:#ffffff"></div>
<div class="t" style="left:250.5px;top:529.0px;font-size:12.7px;color:#000;">Filtr:</div>
<div style="left:287px;top:530px;width:2px;height:16px;background:#000"></div>
<div style="left:1008px;top:525px;width:1px;height:24px;background:#a0a0a0"></div>
<div style="left:244px;top:548px;width:765px;height:1px;background:#a0a0a0"></div>
<div style="left:244px;top:549px;width:765px;height:331px;background:#ffffff"></div>
<div style="left:493px;top:550px;width:1px;height:23px;background:#e5e5e5"></div>
<div style="left:643px;top:550px;width:1px;height:23px;background:#e5e5e5"></div>
<div style="left:743px;top:550px;width:1px;height:23px;background:#e5e5e5"></div>
<div class="t" style="left:250.5px;top:555.4px;font-size:12.7px;color:#000;">Nazwa</div>
<div class="t" style="left:500.4px;top:555.4px;font-size:12.7px;color:#000;">Poczta</div>
<svg style="position:absolute;left:547px;top:559px" width="10" height="6" viewBox="0 0 10 6"><path d="M0 6L5 0.5L10 6Z" fill="#a0a0a0"/></svg>
<div class="t" style="left:650.2px;top:555.4px;font-size:12.7px;color:#000;">Kod urzędu</div>
<div style="left:244px;top:573px;width:249px;height:21px;background:#c9def3"></div>
<div style="left:494px;top:573px;width:149px;height:21px;background:#c9def3"></div>
<div style="left:644px;top:573px;width:99px;height:21px;background:#c9def3"></div>
<div style="left:245px;top:594px;width:498px;height:1px;background-image:linear-gradient(90deg,#e6e6e6 50%,transparent 50%);background-size:2px 1px"></div>
<div style="left:493px;top:573px;width:1px;height:22px;background-image:linear-gradient(180deg,#ececec 50%,transparent 50%);background-size:1px 2px"></div>
<div style="left:643px;top:573px;width:1px;height:22px;background-image:linear-gradient(180deg,#ececec 50%,transparent 50%);background-size:1px 2px"></div>
<div style="left:743px;top:573px;width:1px;height:22px;background-image:linear-gradient(180deg,#ececec 50%,transparent 50%);background-size:1px 2px"></div>
<svg style="position:absolute;left:249px;top:575px" width="14" height="16" viewBox="0 0 14 16"><defs><linearGradient id="dk" x1="0" y1="0" x2="1" y2="1"><stop offset="0" stop-color="#f8c890"/><stop offset="0.5" stop-color="#e0a050"/><stop offset="1" stop-color="#c88030"/></linearGradient></defs><circle cx="7" cy="4.2" r="2.5" fill="#d89a58" stroke="#b06a20" stroke-width="0.8"/><path d="M3.2 9C3.2 6.5 4.8 6 7 6C9.2 6 10.8 6.5 10.8 9Z" fill="#2a4aa0"/><rect x="6.1" y="6.3" width="1.8" height="2.7" fill="#e8f0ff"/><path d="M1.3 10.2H12.7V15.5H10.2V12.5H6.7V15.5H1.3Z" fill="url(#dk)" stroke="#a85a10" stroke-width="0.9"/><rect x="6.7" y="12.5" width="3.5" height="2" fill="#c88040"/><rect x="0" y="8.8" width="14" height="1.5" rx="0.5" fill="#c87420" stroke="#a85a10" stroke-width="0.5"/></svg>
<div class="t" style="left:270.6px;top:576.6px;font-size:12.7px;color:#000;">Urząd Skarbowy w Aleksandrowie K...</div>
<div class="t" style="left:502px;top:576.6px;font-size:12.7px;color:#000;">Aleksandrów Kujawski</div>
<div class="t" style="left:652.4px;top:576.6px;font-size:12.7px;color:#000;">0402</div>
<div style="left:245px;top:616px;width:498px;height:1px;background-image:linear-gradient(90deg,#e6e6e6 50%,transparent 50%);background-size:2px 1px"></div>
<div style="left:493px;top:595px;width:1px;height:22px;background-image:linear-gradient(180deg,#ececec 50%,transparent 50%);background-size:1px 2px"></div>
<div style="left:643px;top:595px;width:1px;height:22px;background-image:linear-gradient(180deg,#ececec 50%,transparent 50%);background-size:1px 2px"></div>
<div style="left:743px;top:595px;width:1px;height:22px;background-image:linear-gradient(180deg,#ececec 50%,transparent 50%);background-size:1px 2px"></div>
<svg style="position:absolute;left:249px;top:597px" width="14" height="16" viewBox="0 0 14 16"><defs><linearGradient id="dk" x1="0" y1="0" x2="1" y2="1"><stop offset="0" stop-color="#f8c890"/><stop offset="0.5" stop-color="#e0a050"/><stop offset="1" stop-color="#c88030"/></linearGradient></defs><circle cx="7" cy="4.2" r="2.5" fill="#d89a58" stroke="#b06a20" stroke-width="0.8"/><path d="M3.2 9C3.2 6.5 4.8 6 7 6C9.2 6 10.8 6.5 10.8 9Z" fill="#2a4aa0"/><rect x="6.1" y="6.3" width="1.8" height="2.7" fill="#e8f0ff"/><path d="M1.3 10.2H12.7V15.5H10.2V12.5H6.7V15.5H1.3Z" fill="url(#dk)" stroke="#a85a10" stroke-width="0.9"/><rect x="6.7" y="12.5" width="3.5" height="2" fill="#c88040"/><rect x="0" y="8.8" width="14" height="1.5" rx="0.5" fill="#c87420" stroke="#a85a10" stroke-width="0.5"/></svg>
<div class="t" style="left:270.6px;top:598.6px;font-size:12.7px;color:#000;">Urząd Skarbowy w Augustowie</div>
<div class="t" style="left:502px;top:598.6px;font-size:12.7px;color:#000;">Augustów</div>
<div class="t" style="left:652.4px;top:598.6px;font-size:12.7px;color:#000;">2002</div>
<div style="left:245px;top:638px;width:498px;height:1px;background-image:linear-gradient(90deg,#e6e6e6 50%,transparent 50%);background-size:2px 1px"></div>
<div style="left:493px;top:617px;width:1px;height:22px;background-image:linear-gradient(180deg,#ececec 50%,transparent 50%);background-size:1px 2px"></div>
<div style="left:643px;top:617px;width:1px;height:22px;background-image:linear-gradient(180deg,#ececec 50%,transparent 50%);background-size:1px 2px"></div>
<div style="left:743px;top:617px;width:1px;height:22px;background-image:linear-gradient(180deg,#ececec 50%,transparent 50%);background-size:1px 2px"></div>
<svg style="position:absolute;left:249px;top:619px" width="14" height="16" viewBox="0 0 14 16"><defs><linearGradient id="dk" x1="0" y1="0" x2="1" y2="1"><stop offset="0" stop-color="#f8c890"/><stop offset="0.5" stop-color="#e0a050"/><stop offset="1" stop-color="#c88030"/></linearGradient></defs><circle cx="7" cy="4.2" r="2.5" fill="#d89a58" stroke="#b06a20" stroke-width="0.8"/><path d="M3.2 9C3.2 6.5 4.8 6 7 6C9.2 6 10.8 6.5 10.8 9Z" fill="#2a4aa0"/><rect x="6.1" y="6.3" width="1.8" height="2.7" fill="#e8f0ff"/><path d="M1.3 10.2H12.7V15.5H10.2V12.5H6.7V15.5H1.3Z" fill="url(#dk)" stroke="#a85a10" stroke-width="0.9"/><rect x="6.7" y="12.5" width="3.5" height="2" fill="#c88040"/><rect x="0" y="8.8" width="14" height="1.5" rx="0.5" fill="#c87420" stroke="#a85a10" stroke-width="0.5"/></svg>
<div class="t" style="left:270.6px;top:620.6px;font-size:12.7px;color:#000;">Urząd Skarbowy w Bartoszycach</div>
<div class="t" style="left:502px;top:620.6px;font-size:12.7px;color:#000;">Bartoszyce</div>
<div class="t" style="left:652.4px;top:620.6px;font-size:12.7px;color:#000;">2802</div>
<div style="left:245px;top:660px;width:498px;height:1px;background-image:linear-gradient(90deg,#e6e6e6 50%,transparent 50%);background-size:2px 1px"></div>
<div style="left:493px;top:639px;width:1px;height:22px;background-image:linear-gradient(180deg,#ececec 50%,transparent 50%);background-size:1px 2px"></div>
<div style="left:643px;top:639px;width:1px;height:22px;background-image:linear-gradient(180deg,#ececec 50%,transparent 50%);background-size:1px 2px"></div>
<div style="left:743px;top:639px;width:1px;height:22px;background-image:linear-gradient(180deg,#ececec 50%,transparent 50%);background-size:1px 2px"></div>
<svg style="position:absolute;left:249px;top:641px" width="14" height="16" viewBox="0 0 14 16"><defs><linearGradient id="dk" x1="0" y1="0" x2="1" y2="1"><stop offset="0" stop-color="#f8c890"/><stop offset="0.5" stop-color="#e0a050"/><stop offset="1" stop-color="#c88030"/></linearGradient></defs><circle cx="7" cy="4.2" r="2.5" fill="#d89a58" stroke="#b06a20" stroke-width="0.8"/><path d="M3.2 9C3.2 6.5 4.8 6 7 6C9.2 6 10.8 6.5 10.8 9Z" fill="#2a4aa0"/><rect x="6.1" y="6.3" width="1.8" height="2.7" fill="#e8f0ff"/><path d="M1.3 10.2H12.7V15.5H10.2V12.5H6.7V15.5H1.3Z" fill="url(#dk)" stroke="#a85a10" stroke-width="0.9"/><rect x="6.7" y="12.5" width="3.5" height="2" fill="#c88040"/><rect x="0" y="8.8" width="14" height="1.5" rx="0.5" fill="#c87420" stroke="#a85a10" stroke-width="0.5"/></svg>
<div class="t" style="left:270.6px;top:642.6px;font-size:12.7px;color:#000;">Urząd Skarbowy w Bełchatowie</div>
<div class="t" style="left:502px;top:642.6px;font-size:12.7px;color:#000;">Bełchatów</div>
<div class="t" style="left:652.4px;top:642.6px;font-size:12.7px;color:#000;">1002</div>
<div style="left:245px;top:682px;width:498px;height:1px;background-image:linear-gradient(90deg,#e6e6e6 50%,transparent 50%);background-size:2px 1px"></div>
<div style="left:493px;top:661px;width:1px;height:22px;background-image:linear-gradient(180deg,#ececec 50%,transparent 50%);background-size:1px 2px"></div>
<div style="left:643px;top:661px;width:1px;height:22px;background-image:linear-gradient(180deg,#ececec 50%,transparent 50%);background-size:1px 2px"></div>
<div style="left:743px;top:661px;width:1px;height:22px;background-image:linear-gradient(180deg,#ececec 50%,transparent 50%);background-size:1px 2px"></div>
<svg style="position:absolute;left:249px;top:663px" width="14" height="16" viewBox="0 0 14 16"><defs><linearGradient id="dk" x1="0" y1="0" x2="1" y2="1"><stop offset="0" stop-color="#f8c890"/><stop offset="0.5" stop-color="#e0a050"/><stop offset="1" stop-color="#c88030"/></linearGradient></defs><circle cx="7" cy="4.2" r="2.5" fill="#d89a58" stroke="#b06a20" stroke-width="0.8"/><path d="M3.2 9C3.2 6.5 4.8 6 7 6C9.2 6 10.8 6.5 10.8 9Z" fill="#2a4aa0"/><rect x="6.1" y="6.3" width="1.8" height="2.7" fill="#e8f0ff"/><path d="M1.3 10.2H12.7V15.5H10.2V12.5H6.7V15.5H1.3Z" fill="url(#dk)" stroke="#a85a10" stroke-width="0.9"/><rect x="6.7" y="12.5" width="3.5" height="2" fill="#c88040"/><rect x="0" y="8.8" width="14" height="1.5" rx="0.5" fill="#c87420" stroke="#a85a10" stroke-width="0.5"/></svg>
<div class="t" style="left:270.6px;top:664.6px;font-size:12.7px;color:#000;">Urząd Skarbowy w Będzinie</div>
<div class="t" style="left:502px;top:664.6px;font-size:12.7px;color:#000;">Będzin</div>
<div class="t" style="left:652.4px;top:664.6px;font-size:12.7px;color:#000;">2402</div>
<div style="left:245px;top:704px;width:498px;height:1px;background-image:linear-gradient(90deg,#e6e6e6 50%,transparent 50%);background-size:2px 1px"></div>
<div style="left:493px;top:683px;width:1px;height:22px;background-image:linear-gradient(180deg,#ececec 50%,transparent 50%);background-size:1px 2px"></div>
<div style="left:643px;top:683px;width:1px;height:22px;background-image:linear-gradient(180deg,#ececec 50%,transparent 50%);background-size:1px 2px"></div>
<div style="left:743px;top:683px;width:1px;height:22px;background-image:linear-gradient(180deg,#ececec 50%,transparent 50%);background-size:1px 2px"></div>
<svg style="position:absolute;left:249px;top:685px" width="14" height="16" viewBox="0 0 14 16"><defs><linearGradient id="dk" x1="0" y1="0" x2="1" y2="1"><stop offset="0" stop-color="#f8c890"/><stop offset="0.5" stop-color="#e0a050"/><stop offset="1" stop-color="#c88030"/></linearGradient></defs><circle cx="7" cy="4.2" r="2.5" fill="#d89a58" stroke="#b06a20" stroke-width="0.8"/><path d="M3.2 9C3.2 6.5 4.8 6 7 6C9.2 6 10.8 6.5 10.8 9Z" fill="#2a4aa0"/><rect x="6.1" y="6.3" width="1.8" height="2.7" fill="#e8f0ff"/><path d="M1.3 10.2H12.7V15.5H10.2V12.5H6.7V15.5H1.3Z" fill="url(#dk)" stroke="#a85a10" stroke-width="0.9"/><rect x="6.7" y="12.5" width="3.5" height="2" fill="#c88040"/><rect x="0" y="8.8" width="14" height="1.5" rx="0.5" fill="#c87420" stroke="#a85a10" stroke-width="0.5"/></svg>
<div class="t" style="left:270.6px;top:686.6px;font-size:12.7px;color:#000;">Urząd Skarbowy w Białej Podlaskiej</div>
<div class="t" style="left:502px;top:686.6px;font-size:12.7px;color:#000;">Biała Podlaska</div>
<div class="t" style="left:652.4px;top:686.6px;font-size:12.7px;color:#000;">0602</div>
<div style="left:245px;top:726px;width:498px;height:1px;background-image:linear-gradient(90deg,#e6e6e6 50%,transparent 50%);background-size:2px 1px"></div>
<div style="left:493px;top:705px;width:1px;height:22px;background-image:linear-gradient(180deg,#ececec 50%,transparent 50%);background-size:1px 2px"></div>
<div style="left:643px;top:705px;width:1px;height:22px;background-image:linear-gradient(180deg,#ececec 50%,transparent 50%);background-size:1px 2px"></div>
<div style="left:743px;top:705px;width:1px;height:22px;background-image:linear-gradient(180deg,#ececec 50%,transparent 50%);background-size:1px 2px"></div>
<svg style="position:absolute;left:249px;top:707px" width="14" height="16" viewBox="0 0 14 16"><defs><linearGradient id="dk" x1="0" y1="0" x2="1" y2="1"><stop offset="0" stop-color="#f8c890"/><stop offset="0.5" stop-color="#e0a050"/><stop offset="1" stop-color="#c88030"/></linearGradient></defs><circle cx="7" cy="4.2" r="2.5" fill="#d89a58" stroke="#b06a20" stroke-width="0.8"/><path d="M3.2 9C3.2 6.5 4.8 6 7 6C9.2 6 10.8 6.5 10.8 9Z" fill="#2a4aa0"/><rect x="6.1" y="6.3" width="1.8" height="2.7" fill="#e8f0ff"/><path d="M1.3 10.2H12.7V15.5H10.2V12.5H6.7V15.5H1.3Z" fill="url(#dk)" stroke="#a85a10" stroke-width="0.9"/><rect x="6.7" y="12.5" width="3.5" height="2" fill="#c88040"/><rect x="0" y="8.8" width="14" height="1.5" rx="0.5" fill="#c87420" stroke="#a85a10" stroke-width="0.5"/></svg>
<div class="t" style="left:270.6px;top:708.6px;font-size:12.7px;color:#000;">Urząd Skarbowy w Białobrzegach</div>
<div class="t" style="left:502px;top:708.6px;font-size:12.7px;color:#000;">Białobrzegi</div>
<div class="t" style="left:652.4px;top:708.6px;font-size:12.7px;color:#000;">1402</div>
<div style="left:245px;top:748px;width:498px;height:1px;background-image:linear-gradient(90deg,#e6e6e6 50%,transparent 50%);background-size:2px 1px"></div>
<div style="left:493px;top:727px;width:1px;height:22px;background-image:linear-gradient(180deg,#ececec 50%,transparent 50%);background-size:1px 2px"></div>
<div style="left:643px;top:727px;width:1px;height:22px;background-image:linear-gradient(180deg,#ececec 50%,transparent 50%);background-size:1px 2px"></div>
<div style="left:743px;top:727px;width:1px;height:22px;background-image:linear-gradient(180deg,#ececec 50%,transparent 50%);background-size:1px 2px"></div>
<svg style="position:absolute;left:249px;top:729px" width="14" height="16" viewBox="0 0 14 16"><defs><linearGradient id="dk" x1="0" y1="0" x2="1" y2="1"><stop offset="0" stop-color="#f8c890"/><stop offset="0.5" stop-color="#e0a050"/><stop offset="1" stop-color="#c88030"/></linearGradient></defs><circle cx="7" cy="4.2" r="2.5" fill="#d89a58" stroke="#b06a20" stroke-width="0.8"/><path d="M3.2 9C3.2 6.5 4.8 6 7 6C9.2 6 10.8 6.5 10.8 9Z" fill="#2a4aa0"/><rect x="6.1" y="6.3" width="1.8" height="2.7" fill="#e8f0ff"/><path d="M1.3 10.2H12.7V15.5H10.2V12.5H6.7V15.5H1.3Z" fill="url(#dk)" stroke="#a85a10" stroke-width="0.9"/><rect x="6.7" y="12.5" width="3.5" height="2" fill="#c88040"/><rect x="0" y="8.8" width="14" height="1.5" rx="0.5" fill="#c87420" stroke="#a85a10" stroke-width="0.5"/></svg>
<div class="t" style="left:270.6px;top:730.6px;font-size:12.7px;color:#000;">Urząd Skarbowy w Białogardzie</div>
<div class="t" style="left:502px;top:730.6px;font-size:12.7px;color:#000;">Białogard</div>
<div class="t" style="left:652.4px;top:730.6px;font-size:12.7px;color:#000;">3202</div>
<div style="left:245px;top:770px;width:498px;height:1px;background-image:linear-gradient(90deg,#e6e6e6 50%,transparent 50%);background-size:2px 1px"></div>
<div style="left:493px;top:749px;width:1px;height:22px;background-image:linear-gradient(180deg,#ececec 50%,transparent 50%);background-size:1px 2px"></div>
<div style="left:643px;top:749px;width:1px;height:22px;background-image:linear-gradient(180deg,#ececec 50%,transparent 50%);background-size:1px 2px"></div>
<div style="left:743px;top:749px;width:1px;height:22px;background-image:linear-gradient(180deg,#ececec 50%,transparent 50%);background-size:1px 2px"></div>
<svg style="position:absolute;left:249px;top:751px" width="14" height="16" viewBox="0 0 14 16"><defs><linearGradient id="dk" x1="0" y1="0" x2="1" y2="1"><stop offset="0" stop-color="#f8c890"/><stop offset="0.5" stop-color="#e0a050"/><stop offset="1" stop-color="#c88030"/></linearGradient></defs><circle cx="7" cy="4.2" r="2.5" fill="#d89a58" stroke="#b06a20" stroke-width="0.8"/><path d="M3.2 9C3.2 6.5 4.8 6 7 6C9.2 6 10.8 6.5 10.8 9Z" fill="#2a4aa0"/><rect x="6.1" y="6.3" width="1.8" height="2.7" fill="#e8f0ff"/><path d="M1.3 10.2H12.7V15.5H10.2V12.5H6.7V15.5H1.3Z" fill="url(#dk)" stroke="#a85a10" stroke-width="0.9"/><rect x="6.7" y="12.5" width="3.5" height="2" fill="#c88040"/><rect x="0" y="8.8" width="14" height="1.5" rx="0.5" fill="#c87420" stroke="#a85a10" stroke-width="0.5"/></svg>
<div class="t" style="left:270.6px;top:752.6px;font-size:12.7px;color:#000;">Drugi Urząd Skarbowy w Białymstoku</div>
<div class="t" style="left:502px;top:752.6px;font-size:12.7px;color:#000;">Białystok</div>
<div class="t" style="left:652.4px;top:752.6px;font-size:12.7px;color:#000;">2004</div>
<div style="left:245px;top:792px;width:498px;height:1px;background-image:linear-gradient(90deg,#e6e6e6 50%,transparent 50%);background-size:2px 1px"></div>
<div style="left:493px;top:771px;width:1px;height:22px;background-image:linear-gradient(180deg,#ececec 50%,transparent 50%);background-size:1px 2px"></div>
<div style="left:643px;top:771px;width:1px;height:22px;background-image:linear-gradient(180deg,#ececec 50%,transparent 50%);background-size:1px 2px"></div>
<div style="left:743px;top:771px;width:1px;height:22px;background-image:linear-gradient(180deg,#ececec 50%,transparent 50%);background-size:1px 2px"></div>
<svg style="position:absolute;left:249px;top:773px" width="14" height="16" viewBox="0 0 14 16"><defs><linearGradient id="dk" x1="0" y1="0" x2="1" y2="1"><stop offset="0" stop-color="#f8c890"/><stop offset="0.5" stop-color="#e0a050"/><stop offset="1" stop-color="#c88030"/></linearGradient></defs><circle cx="7" cy="4.2" r="2.5" fill="#d89a58" stroke="#b06a20" stroke-width="0.8"/><path d="M3.2 9C3.2 6.5 4.8 6 7 6C9.2 6 10.8 6.5 10.8 9Z" fill="#2a4aa0"/><rect x="6.1" y="6.3" width="1.8" height="2.7" fill="#e8f0ff"/><path d="M1.3 10.2H12.7V15.5H10.2V12.5H6.7V15.5H1.3Z" fill="url(#dk)" stroke="#a85a10" stroke-width="0.9"/><rect x="6.7" y="12.5" width="3.5" height="2" fill="#c88040"/><rect x="0" y="8.8" width="14" height="1.5" rx="0.5" fill="#c87420" stroke="#a85a10" stroke-width="0.5"/></svg>
<div class="t" style="left:270.6px;top:774.6px;font-size:12.7px;color:#000;">Podlaski Urząd Skarbowy w Białyms...</div>
<div class="t" style="left:502px;top:774.6px;font-size:12.7px;color:#000;">Białystok</div>
<div class="t" style="left:652.4px;top:774.6px;font-size:12.7px;color:#000;">2071</div>
<div style="left:245px;top:814px;width:498px;height:1px;background-image:linear-gradient(90deg,#e6e6e6 50%,transparent 50%);background-size:2px 1px"></div>
<div style="left:493px;top:793px;width:1px;height:22px;background-image:linear-gradient(180deg,#ececec 50%,transparent 50%);background-size:1px 2px"></div>
<div style="left:643px;top:793px;width:1px;height:22px;background-image:linear-gradient(180deg,#ececec 50%,transparent 50%);background-size:1px 2px"></div>
<div style="left:743px;top:793px;width:1px;height:22px;background-image:linear-gradient(180deg,#ececec 50%,transparent 50%);background-size:1px 2px"></div>
<svg style="position:absolute;left:249px;top:795px" width="14" height="16" viewBox="0 0 14 16"><defs><linearGradient id="dk" x1="0" y1="0" x2="1" y2="1"><stop offset="0" stop-color="#f8c890"/><stop offset="0.5" stop-color="#e0a050"/><stop offset="1" stop-color="#c88030"/></linearGradient></defs><circle cx="7" cy="4.2" r="2.5" fill="#d89a58" stroke="#b06a20" stroke-width="0.8"/><path d="M3.2 9C3.2 6.5 4.8 6 7 6C9.2 6 10.8 6.5 10.8 9Z" fill="#2a4aa0"/><rect x="6.1" y="6.3" width="1.8" height="2.7" fill="#e8f0ff"/><path d="M1.3 10.2H12.7V15.5H10.2V12.5H6.7V15.5H1.3Z" fill="url(#dk)" stroke="#a85a10" stroke-width="0.9"/><rect x="6.7" y="12.5" width="3.5" height="2" fill="#c88040"/><rect x="0" y="8.8" width="14" height="1.5" rx="0.5" fill="#c87420" stroke="#a85a10" stroke-width="0.5"/></svg>
<div class="t" style="left:270.6px;top:796.6px;font-size:12.7px;color:#000;">Pierwszy Urząd Skarbowy w Białyms...</div>
<div class="t" style="left:502px;top:796.6px;font-size:12.7px;color:#000;">Białystok</div>
<div class="t" style="left:652.4px;top:796.6px;font-size:12.7px;color:#000;">2003</div>
<div style="left:245px;top:836px;width:498px;height:1px;background-image:linear-gradient(90deg,#e6e6e6 50%,transparent 50%);background-size:2px 1px"></div>
<div style="left:493px;top:815px;width:1px;height:22px;background-image:linear-gradient(180deg,#ececec 50%,transparent 50%);background-size:1px 2px"></div>
<div style="left:643px;top:815px;width:1px;height:22px;background-image:linear-gradient(180deg,#ececec 50%,transparent 50%);background-size:1px 2px"></div>
<div style="left:743px;top:815px;width:1px;height:22px;background-image:linear-gradient(180deg,#ececec 50%,transparent 50%);background-size:1px 2px"></div>
<svg style="position:absolute;left:249px;top:817px" width="14" height="16" viewBox="0 0 14 16"><defs><linearGradient id="dk" x1="0" y1="0" x2="1" y2="1"><stop offset="0" stop-color="#f8c890"/><stop offset="0.5" stop-color="#e0a050"/><stop offset="1" stop-color="#c88030"/></linearGradient></defs><circle cx="7" cy="4.2" r="2.5" fill="#d89a58" stroke="#b06a20" stroke-width="0.8"/><path d="M3.2 9C3.2 6.5 4.8 6 7 6C9.2 6 10.8 6.5 10.8 9Z" fill="#2a4aa0"/><rect x="6.1" y="6.3" width="1.8" height="2.7" fill="#e8f0ff"/><path d="M1.3 10.2H12.7V15.5H10.2V12.5H6.7V15.5H1.3Z" fill="url(#dk)" stroke="#a85a10" stroke-width="0.9"/><rect x="6.7" y="12.5" width="3.5" height="2" fill="#c88040"/><rect x="0" y="8.8" width="14" height="1.5" rx="0.5" fill="#c87420" stroke="#a85a10" stroke-width="0.5"/></svg>
<div class="t" style="left:270.6px;top:818.6px;font-size:12.7px;color:#000;">Urząd Skarbowy w Bielsku Podlaskim</div>
<div class="t" style="left:502px;top:818.6px;font-size:12.7px;color:#000;">Bielsk Podlaski</div>
<div class="t" style="left:652.4px;top:818.6px;font-size:12.7px;color:#000;">2005</div>
<div style="left:245px;top:858px;width:498px;height:1px;background-image:linear-gradient(90deg,#e6e6e6 50%,transparent 50%);background-size:2px 1px"></div>
<div style="left:493px;top:837px;width:1px;height:22px;background-image:linear-gradient(180deg,#ececec 50%,transparent 50%);background-size:1px 2px"></div>
<div style="left:643px;top:837px;width:1px;height:22px;background-image:linear-gradient(180deg,#ececec 50%,transparent 50%);background-size:1px 2px"></div>
<div style="left:743px;top:837px;width:1px;height:22px;background-image:linear-gradient(180deg,#ececec 50%,transparent 50%);background-size:1px 2px"></div>
<svg style="position:absolute;left:249px;top:839px" width="14" height="16" viewBox="0 0 14 16"><defs><linearGradient id="dk" x1="0" y1="0" x2="1" y2="1"><stop offset="0" stop-color="#f8c890"/><stop offset="0.5" stop-color="#e0a050"/><stop offset="1" stop-color="#c88030"/></linearGradient></defs><circle cx="7" cy="4.2" r="2.5" fill="#d89a58" stroke="#b06a20" stroke-width="0.8"/><path d="M3.2 9C3.2 6.5 4.8 6 7 6C9.2 6 10.8 6.5 10.8 9Z" fill="#2a4aa0"/><rect x="6.1" y="6.3" width="1.8" height="2.7" fill="#e8f0ff"/><path d="M1.3 10.2H12.7V15.5H10.2V12.5H6.7V15.5H1.3Z" fill="url(#dk)" stroke="#a85a10" stroke-width="0.9"/><rect x="6.7" y="12.5" width="3.5" height="2" fill="#c88040"/><rect x="0" y="8.8" width="14" height="1.5" rx="0.5" fill="#c87420" stroke="#a85a10" stroke-width="0.5"/></svg>
<div class="t" style="left:270.6px;top:840.6px;font-size:12.7px;color:#000;">Drugi Urząd Skarbowy w Bielsku-Bia...</div>
<div class="t" style="left:502px;top:840.6px;font-size:12.7px;color:#000;">Bielsko-Biała</div>
<div class="t" style="left:652.4px;top:840.6px;font-size:12.7px;color:#000;">2404</div>
<div style="left:245px;top:880px;width:498px;height:1px;background-image:linear-gradient(90deg,#e6e6e6 50%,transparent 50%);background-size:2px 1px"></div>
<div style="left:493px;top:859px;width:1px;height:22px;background-image:linear-gradient(180deg,#ececec 50%,transparent 50%);background-size:1px 2px"></div>
<div style="left:643px;top:859px;width:1px;height:22px;background-image:linear-gradient(180deg,#ececec 50%,transparent 50%);background-size:1px 2px"></div>
<div style="left:743px;top:859px;width:1px;height:22px;background-image:linear-gradient(180deg,#ececec 50%,transparent 50%);background-size:1px 2px"></div>
<svg style="position:absolute;left:249px;top:861px" width="14" height="16" viewBox="0 0 14 16"><defs><linearGradient id="dk" x1="0" y1="0" x2="1" y2="1"><stop offset="0" stop-color="#f8c890"/><stop offset="0.5" stop-color="#e0a050"/><stop offset="1" stop-color="#c88030"/></linearGradient></defs><circle cx="7" cy="4.2" r="2.5" fill="#d89a58" stroke="#b06a20" stroke-width="0.8"/><path d="M3.2 9C3.2 6.5 4.8 6 7 6C9.2 6 10.8 6.5 10.8 9Z" fill="#2a4aa0"/><rect x="6.1" y="6.3" width="1.8" height="2.7" fill="#e8f0ff"/><path d="M1.3 10.2H12.7V15.5H10.2V12.5H6.7V15.5H1.3Z" fill="url(#dk)" stroke="#a85a10" stroke-width="0.9"/><rect x="6.7" y="12.5" width="3.5" height="2" fill="#c88040"/><rect x="0" y="8.8" width="14" height="1.5" rx="0.5" fill="#c87420" stroke="#a85a10" stroke-width="0.5"/></svg>
<div class="t" style="left:270.6px;top:862.6px;font-size:12.7px;color:#000;">Drugi Śląski Urząd Skarbowy&nbsp; w Biel...</div>
<div class="t" style="left:502px;top:862.6px;font-size:12.7px;color:#000;">Bielsko-Biała</div>
<div class="t" style="left:652.4px;top:862.6px;font-size:12.7px;color:#000;">2472</div>
<div style="left:994px;top:573px;width:16px;height:307px;background:#f0f0f0"></div>
<svg style="position:absolute;left:997px;top:578px" width="9" height="6" viewBox="0 0 9 6"><path d="M1 5.5L4.5 1.5L8 5.5" stroke="#606060" stroke-width="1.6" fill="none"/></svg>
<div style="left:994px;top:590px;width:15px;height:17px;background:#cdcdcd"></div>
<svg style="position:absolute;left:997px;top:868px" width="9" height="6" viewBox="0 0 9 6"><path d="M1 0.5L4.5 4.5L8 0.5" stroke="#606060" stroke-width="1.6" fill="none"/></svg>
<div style="left:244px;top:880px;width:766px;height:1px;background:#c8c8c8"></div>
<div style="left:244px;top:881px;width:766px;height:22px;background:#dcdcdc"></div>
<svg style="position:absolute;left:994px;top:886px" width="12" height="12" viewBox="0 0 12 12"><rect x="8" y="1" width="2" height="2" fill="#a0a0a0"/><rect x="4" y="5" width="2" height="2" fill="#a0a0a0"/><rect x="8" y="5" width="2" height="2" fill="#a0a0a0"/><rect x="0" y="9" width="2" height="2" fill="#a0a0a0"/><rect x="4" y="9" width="2" height="2" fill="#a0a0a0"/><rect x="8" y="9" width="2" height="2" fill="#a0a0a0"/></svg>
<svg style="position:absolute;left:61px;top:132px" width="14" height="21" viewBox="0 0 14 21"><path d="M1 1V17L5 13L8 20L10.5 19L7.5 12H13Z" fill="#fff" stroke="#000" stroke-width="1"/></svg>
</body></html>
